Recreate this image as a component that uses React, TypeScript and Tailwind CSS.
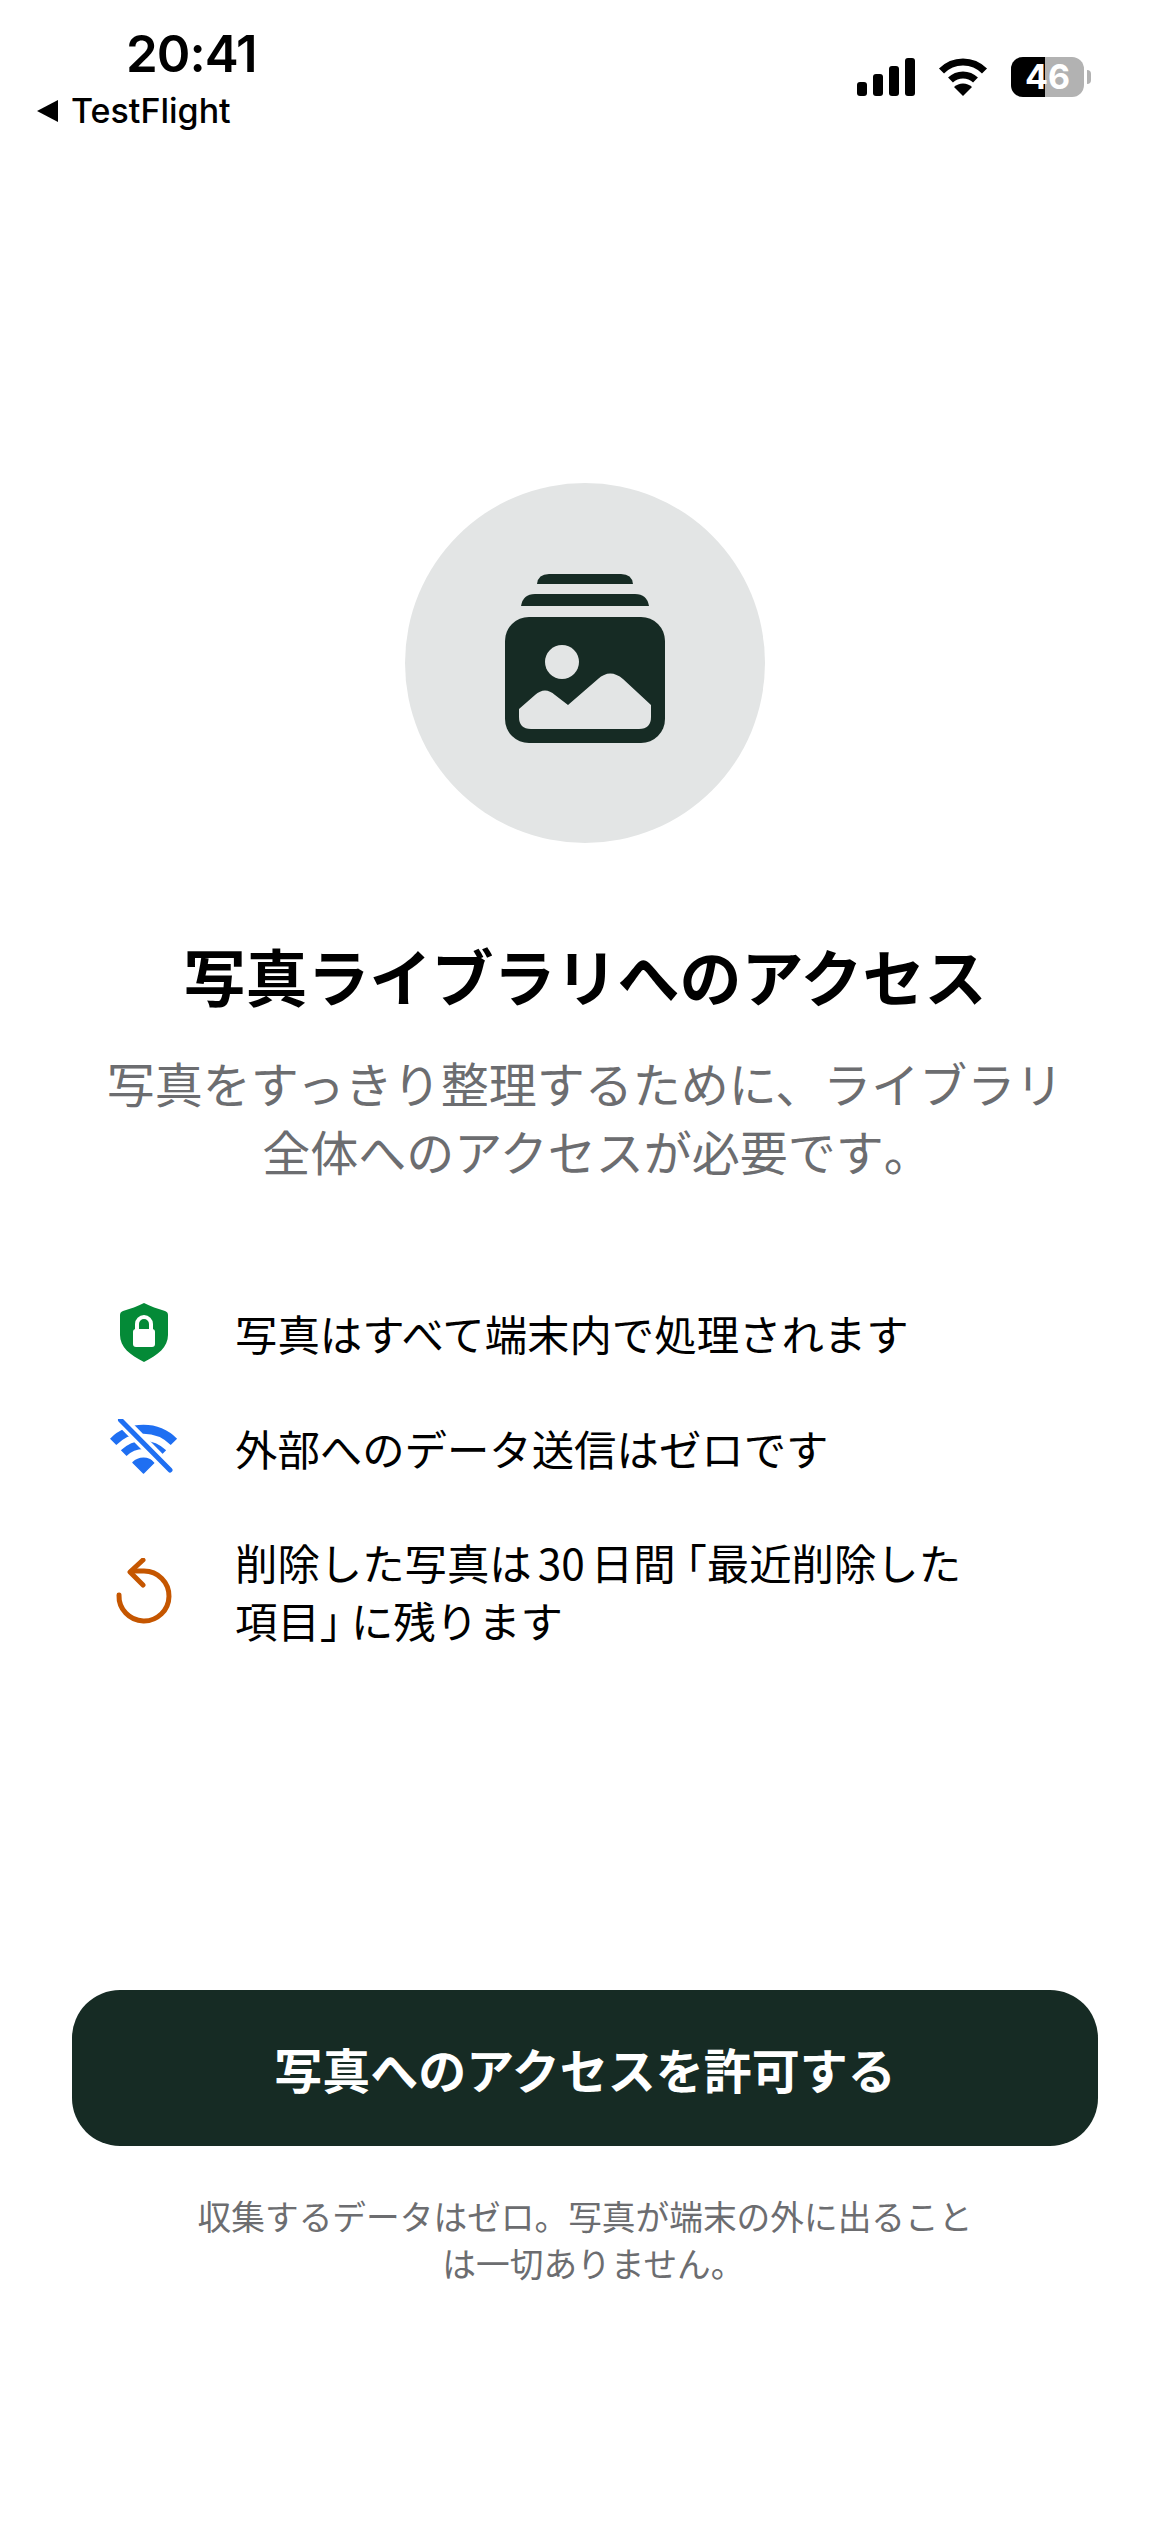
const jp = { fontFamily: '"Noto Sans CJK JP", sans-serif' };

function StatusBar() {
	return (
		<header className="flex justify-between h-[150px] pl-[36px] pr-[79px] font-['Inter',sans-serif] text-black">
			<div className="flex flex-col pt-[26px]">
				<span className="ml-[90px] text-[51px] leading-[56px] font-semibold tracking-[-1px]">20:41</span>
				<div className="flex items-center gap-[11px] mt-[8px]">
					<svg width="24" height="24" viewBox="0 0 24 24">
						<path d="M1 12 L22 1 V23 Z" fill="black" />
					</svg>
					<span className="text-[34px] leading-[42px] font-medium">TestFlight</span>
				</div>
			</div>
			<div className="flex items-center gap-[23px] h-[60px] mt-[47px]">
				<svg width="58" height="38" viewBox="0 0 58 38" fill="black">
					<rect x="0" y="24" width="10" height="14" rx="3" />
					<rect x="16" y="16" width="10" height="22" rx="3" />
					<rect x="32" y="8" width="10" height="30" rx="3" />
					<rect x="48" y="0" width="10" height="38" rx="3" />
				</svg>
				<svg width="50" height="38" viewBox="0 0 50 38" fill="none" stroke="black">
					<path d="M3.5 13 A30 30 0 0 1 46.500 13" strokeWidth="7" />
					<path d="M12.500 22 A18 18 0 0 1 37.500 22" strokeWidth="7" />
					<path d="M25 38 L16 29 A13 13 0 0 1 34 29 Z" fill="black" stroke="none" />
				</svg>
				<div className="flex items-center gap-[3px]">
					<div className="relative w-[73px] h-[40px] rounded-[12px] bg-[#b2b2b2] overflow-hidden flex items-center justify-center">
						<div className="absolute left-0 top-0 bottom-0 w-[34px] bg-black" />
						<span className="relative text-white text-[34px] leading-none font-bold">46</span>
					</div>
					<div className="w-[4px] h-[14px] rounded-r-full bg-[#b2b2b2]" />
				</div>
			</div>
		</header>
	);
}

function PhotosIcon() {
	return (
		<svg width="160" height="169" viewBox="0 0 160 169">
			<path d="M32 10 Q33 0 44 0 H116 Q127 0 128 10 Z" fill="#162b24" />
			<path d="M16 32 Q18 20 30 20 H130 Q142 20 144 32 Z" fill="#162b24" />
			<rect x="0" y="43" width="160" height="126" rx="24" fill="#162b24" />
			<circle cx="57" cy="88" r="17" fill="#e3e5e5" />
			<path d="M14 135 L30 121 Q40 112 50 121 L63 131 L93 105 Q105 94 118 105 L146 131 V143 Q146 155 134 155 H26 Q14 155 14 143 Z" fill="#e3e5e5" />
		</svg>
	);
}

function ShieldIcon() {
	return (
		<svg width="48" height="60" viewBox="0 0 48 60">
			<path d="M24 0 C30 3 38 6 45 8 Q48 9 48 12 V32 C48 44 38 52 24 59 C10 52 0 44 0 32 V12 Q0 9 3 8 C10 6 18 3 24 0 Z" fill="#048a37" />
			<rect x="13" y="26" width="22" height="18" rx="3" fill="white" />
			<path d="M17 28 V21 A7 7 0 0 1 31 21 V28" fill="none" stroke="white" strokeWidth="4" />
		</svg>
	);
}

function WifiOffIcon() {
	return (
		<svg width="68" height="58" viewBox="20 146 68 58" fill="none">
			<path d="M23.100 168.900 A43 43 0 0 1 83.900 168.900" stroke="#1f6ff2" strokeWidth="9" strokeLinejoin="round" />
			<path d="M33.700 180.200 A28 28 0 0 1 73.300 180.200" stroke="#1f6ff2" strokeWidth="8" />
			<path d="M53.500 200 L43 189.500 A15 15 0 0 1 64 189.500 Z" fill="#1f6ff2" stroke="#1f6ff2" strokeWidth="1.500" strokeLinejoin="round" />
			<path d="M30 146 L80 197" stroke="white" strokeWidth="12" />
			<path d="M30.500 147 L80 197" stroke="#1f6ff2" strokeWidth="5" strokeLinecap="round" />
		</svg>
	);
}

function UndoIcon() {
	return (
		<svg width="56" height="66" viewBox="0 0 56 66" fill="none" stroke="#c55600" strokeWidth="5" strokeLinecap="round" strokeLinejoin="round">
			<path d="M3 37 A25 25 0 1 0 28 13 H16" />
			<path d="M27 2 L14 14 L27 27" />
		</svg>
	);
}

const points = [
	{ icon: <ShieldIcon />, text: <>写真はすべて端末内で処理されます</> },
	{ icon: <WifiOffIcon />, text: <>外部へのデータ送信はゼロです</> },
	{
		icon: <UndoIcon />,
		text: (
			<>
				削除した写真は<span className="mx-[6px]">30</span>日間
				<span className="ml-[10px] [font-feature-settings:'halt']">「</span>最近削除した
				<br />
				項目<span className="mr-[10px] [font-feature-settings:'halt']">」</span>に残ります
			</>
		),
	},
];

export default function App() {
	return (
		<div className="w-[1170px] h-[2532px] bg-white flex flex-col overflow-hidden" style={jp}>
			<StatusBar />
			<main className="flex flex-col items-center">
				<div className="mt-[333px] w-[360px] h-[360px] rounded-full bg-[#e3e5e5] flex items-center justify-center pb-[10px]">
					<PhotosIcon />
				</div>
				<h1 className="mt-[89px] text-[62px] leading-[86px] font-bold text-black">写真ライブラリへのアクセス</h1>
				<p className="mt-[30px] text-center text-[48px] leading-[68px] text-[#6c6d70]">
					写真をすっきり整理するために、ライブラリ<br />全体へのアクセスが必要です<span className="[font-feature-settings:'halt']">。</span>
				</p>
				<ul className="mt-[119px] self-start pl-[104px] flex flex-col gap-[56px]">
					{points.map((p, i) => (
						<li key={i} className="flex items-center">
							<div className="w-[80px] flex justify-center">{p.icon}</div>
							<p className="ml-[51px] text-[42.400px] leading-[58px] text-black">{p.text}</p>
						</li>
					))}
				</ul>
				<button className="mt-[341px] w-[1026px] h-[156px] rounded-[48px] bg-[#162b24] text-white text-[48px] font-bold">
					写真へのアクセスを許可する
				</button>
				<p className="mt-[46px] text-center text-[33.700px] leading-[47px] text-[#6c6d70]">
					収集するデータはゼロ。写真が端末の外に出ること<br />は一切ありません<span className="[font-feature-settings:'halt']">。</span>
				</p>
			</main>
		</div>
	);
}
